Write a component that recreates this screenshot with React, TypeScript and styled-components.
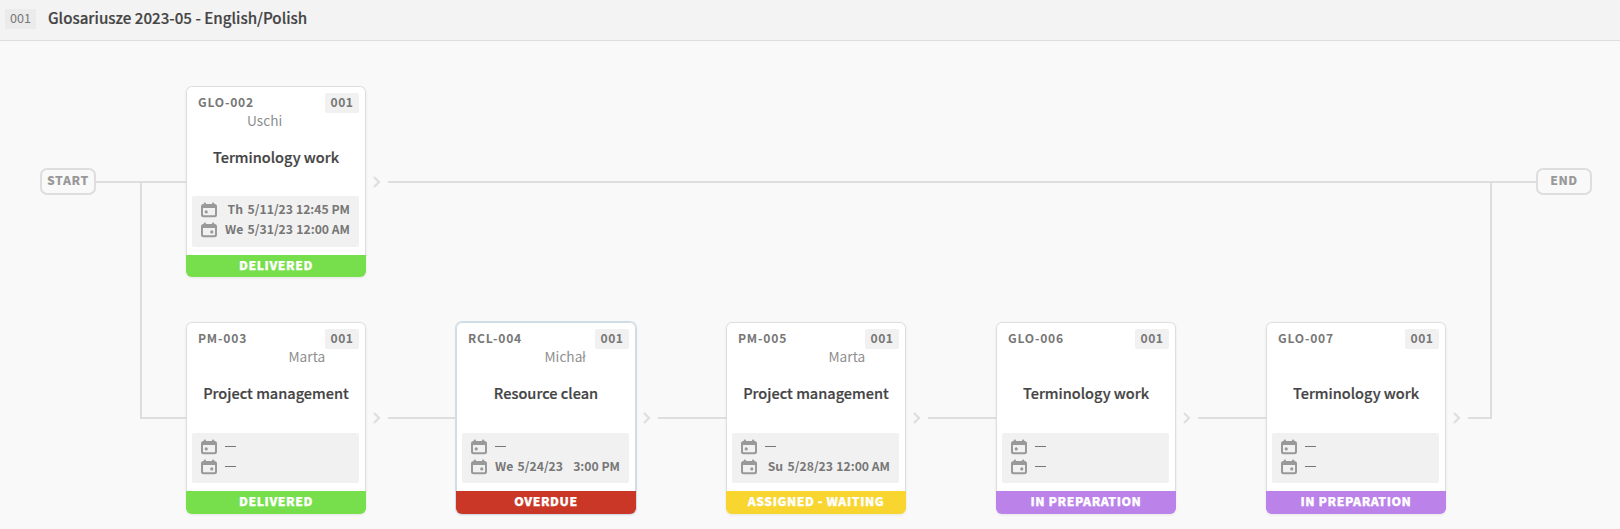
import React from "react";
import styled, { createGlobalStyle } from "styled-components";

const GlobalStyle = createGlobalStyle`
  *, *::before, *::after { box-sizing: border-box; }
  html, body { margin: 0; height: 100%; }
  body {
    background: #f9f9f9;
    color: #444;
    font-family: "Noto Sans CJK SC", "Open Sans", sans-serif;
    overflow: hidden;
  }
`;

const LINE = "#dedede";

const Header = styled.header`
  display: flex;
  align-items: flex-start;
  height: 41px;
  padding: 9px 5px 0;
  background: #f3f3f3;
  border-bottom: 1px solid ${LINE};
`;

const ProjectBadge = styled.span`
  width: 31px;
  height: 20px;
  margin-right: 12px;
  background: #ebebeb;
  color: #777;
  font-size: 12.6px;
  line-height: 18px;
  text-align: center;
`;

const ProjectTitle = styled.h1`
  margin: 0;
  font-size: 15.15px;
  font-weight: 500;
  line-height: 16px;
  white-space: nowrap;
  -webkit-text-stroke: 0.2px;
`;

const Board = styled.main`
  display: grid;
  grid-template-columns: 100px 46px 1fr 24px 100px;
  grid-template-rows: 191.4px 191.4px;
  row-gap: 45px;
  padding: 45px 28px 0 40px;
`;

const Lane = styled.div<{ $row: number; $columns: string }>`
  grid-row: ${(p) => p.$row};
  grid-column: ${(p) => p.$columns};
  display: flex;
  align-items: center;
`;

const Elbow = styled.div<{ $side: "left" | "right" }>`
  grid-row: 1 / 3;
  grid-column: ${(p) => (p.$side === "left" ? 2 : 4)};
  margin: 96.7px 0 94.7px;
  border: 0 solid ${LINE};
  border-bottom-width: 2px;
  ${(p) => (p.$side === "left" ? "border-left-width: 2px;" : "border-right-width: 2px;")}
`;

const Terminal = styled.div`
  flex: none;
  width: 56px;
  height: 27px;
  border: 2px solid ${LINE};
  border-radius: 7px;
  color: #999;
  font-size: 12.2px;
  font-weight: 900;
  letter-spacing: 0.6px;
  line-height: 20px;
  text-align: center;
`;

const Line = styled.div<{ $width?: number }>`
  flex: ${(p) => (p.$width ? `0 0 ${p.$width}px` : "1")};
  height: 2px;
  background: ${LINE};
`;

const Arrow = styled.svg`
  flex: none;
  width: 8px;
  height: 12px;
  margin: 0 7px;
`;

const Card = styled.article<{ $selected?: boolean }>`
  flex: none;
  display: flex;
  flex-direction: column;
  width: 180px;
  height: 191.4px;
  border-radius: 6px;
  background: #fff;
  box-shadow: ${(p) =>
    p.$selected
      ? "inset 0 0 0 1px #cfdde6, 0 0 0 1px #cfdde6, 0 1px 3px rgba(0, 0, 0, 0.1)"
      : "inset 0 0 0 1px #dedede, 0 1px 3px rgba(0, 0, 0, 0.08)"};
`;

const CardTop = styled.div`
  display: flex;
  justify-content: space-between;
  height: 27px;
  padding: 7px 7px 0 12px;
`;

const Code = styled.span`
  color: #777;
  font-size: 12.1px;
  font-weight: 700;
  letter-spacing: 0.8px;
  line-height: 17px;
`;

const Badge = styled.span`
  width: 34px;
  height: 20px;
  border-radius: 2px;
  background: #f1f1f1;
  color: #777;
  font-size: 12.1px;
  font-weight: 700;
  letter-spacing: 0.6px;
  line-height: 18.6px;
  text-align: center;
`;

const Assignee = styled.div<{ $indent: number }>`
  height: 18px;
  padding-left: ${(p) => p.$indent}px;
  color: #8f8f8f;
  font-size: 13.7px;
  line-height: 14px;
`;

const JobName = styled.h2`
  margin: 0;
  height: 65.3px;
  padding-top: 16px;
  font-size: 14.55px;
  font-weight: 500;
  line-height: 20px;
  text-align: center;
  white-space: nowrap;
  -webkit-text-stroke: 0.2px;
`;

const Dates = styled.div`
  height: 50.4px;
  margin: 0 7px 0 6px;
  padding: 5px 9px 0;
  border-radius: 2px;
  background: #f1f1f1;
`;

const DateRow = styled.div`
  display: grid;
  grid-template-columns: 24px 18px 50px 1fr;
  height: 20px;
  color: #777;
  font-size: 12.2px;
  font-weight: 700;
  line-height: 17px;
  white-space: nowrap;

  span { text-align: right; }
`;

const Empty = styled.i`
  width: 11px;
  height: 1px;
  margin-top: 8px;
  background: #777;
`;

const Status = styled.footer<{ $color: string }>`
  height: 22.4px;
  margin-top: auto;
  border-radius: 0 0 6px 6px;
  background: ${(p) => p.$color};
  color: #fff;
  font-size: 12.2px;
  font-weight: 900;
  letter-spacing: 0.55px;
  line-height: 21.4px;
  text-align: center;
  -webkit-text-stroke: 0.25px;
`;

const DateGlyph = styled.svg`
  width: 16px;
  height: 16px;
  margin: 1px 0 0 0;
`;

const CalendarIcon = ({ end }: { end?: boolean }) => (
  <DateGlyph viewBox="0 0 16 16" fill="#999">
    <rect x="2.8" y="0.4" width="2.2" height="3" rx="1" />
    <rect x="11" y="0.4" width="2.2" height="3" rx="1" />
    <path
      fillRule="evenodd"
      d="M2.5 2h11a2.5 2.5 0 0 1 2.5 2.5v8.3a2.5 2.5 0 0 1-2.5 2.5h-11a2.5 2.5 0 0 1-2.5-2.5v-8.3a2.5 2.5 0 0 1 2.5-2.5zM2 6v6.6a.7.7 0 0 0 .7.7h10.6a.7.7 0 0 0 .7-.7V6z"
    />
    <circle cx={end ? 10.8 : 5.2} cy="9.9" r="1.6" />
  </DateGlyph>
);

const Chevron = () => (
  <Arrow viewBox="0 0 8 12" fill="none" stroke={LINE} strokeWidth="2.2">
    <path d="M1 1l5 5-5 5" />
  </Arrow>
);

type When = [day: string, date: string, time: string];

interface Job {
  code: string;
  name: string;
  assignee?: string;
  indent?: number;
  start?: When;
  end?: When;
  status: string;
  color: string;
  selected?: boolean;
}

const GREEN = "#78df4c";
const RED = "#cb3726";
const YELLOW = "#f8d62f";
const PURPLE = "#bb83ea";

const mainJob: Job = {
  code: "GLO-002",
  name: "Terminology work",
  assignee: "Uschi",
  indent: 61,
  start: ["Th", "5/11/23", "12:45 PM"],
  end: ["We", "5/31/23", "12:00 AM"],
  status: "DELIVERED",
  color: GREEN,
};

const branchJobs: Job[] = [
  { code: "PM-003", name: "Project management", assignee: "Marta", indent: 102.5, status: "DELIVERED", color: GREEN },
  {
    code: "RCL-004",
    name: "Resource clean",
    assignee: "Michał",
    indent: 88.5,
    end: ["We", "5/24/23", "3:00 PM"],
    status: "OVERDUE",
    color: RED,
    selected: true,
  },
  {
    code: "PM-005",
    name: "Project management",
    assignee: "Marta",
    indent: 102.5,
    end: ["Su", "5/28/23", "12:00 AM"],
    status: "ASSIGNED - WAITING",
    color: YELLOW,
  },
  { code: "GLO-006", name: "Terminology work", status: "IN PREPARATION", color: PURPLE },
  { code: "GLO-007", name: "Terminology work", status: "IN PREPARATION", color: PURPLE },
];

const DateLine = ({ when, end }: { when?: When; end?: boolean }) => (
  <DateRow>
    <CalendarIcon end={end} />
    {when ? when.map((part) => <span key={part}>{part}</span>) : <Empty />}
  </DateRow>
);

const JobCard = ({ job }: { job: Job }) => (
  <Card $selected={job.selected}>
    <CardTop>
      <Code>{job.code}</Code>
      <Badge>001</Badge>
    </CardTop>
    <Assignee $indent={job.indent ?? 0}>{job.assignee}</Assignee>
    <JobName>{job.name}</JobName>
    <Dates>
      <DateLine when={job.start} />
      <DateLine when={job.end} end />
    </Dates>
    <Status $color={job.color}>{job.status}</Status>
  </Card>
);

export default function App() {
  return (
    <>
      <GlobalStyle />
      <Header>
        <ProjectBadge>001</ProjectBadge>
        <ProjectTitle>Glosariusze 2023-05 - English/Polish</ProjectTitle>
      </Header>
      <Board>
        <Lane $row={1} $columns="1 / -1">
          <Terminal>START</Terminal>
          <Line $width={90} />
          <JobCard job={mainJob} />
          <Chevron />
          <Line />
          <Terminal>END</Terminal>
        </Lane>
        <Elbow $side="left" />
        <Lane $row={2} $columns="3">
          {branchJobs.map((job, i) => (
            <React.Fragment key={job.code}>
              {i > 0 && <Line />}
              <JobCard job={job} />
              <Chevron />
            </React.Fragment>
          ))}
        </Lane>
        <Elbow $side="right" />
      </Board>
    </>
  );
}
